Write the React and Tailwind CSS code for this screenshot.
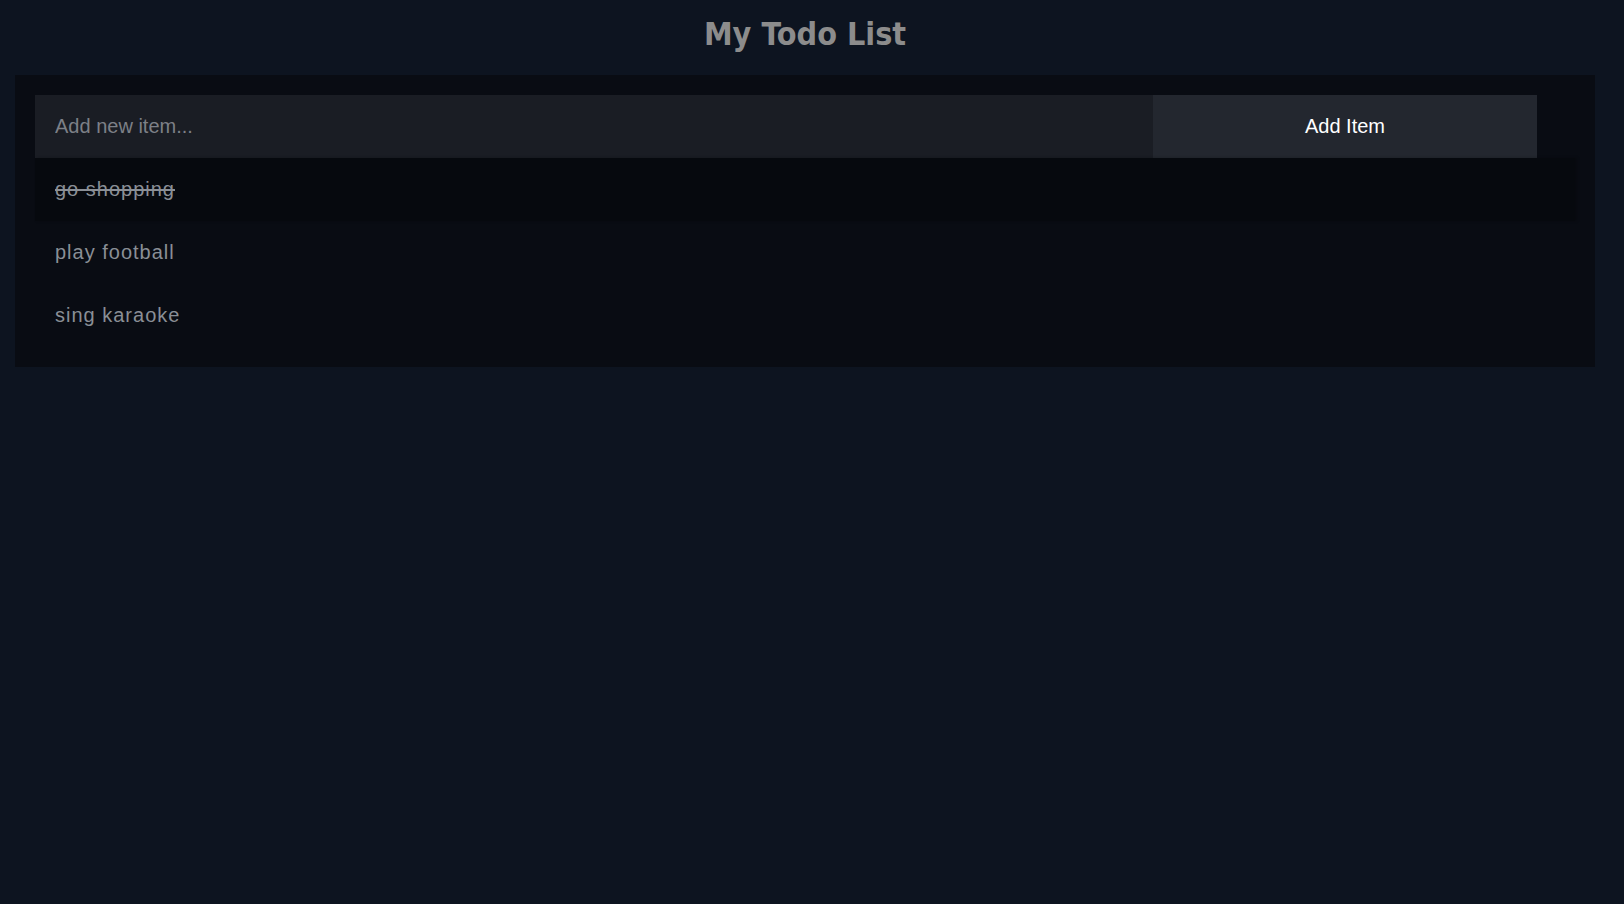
import React from "react";

export default function App() {
  const items = [
    { text: "go shopping", done: true },
    { text: "play football", done: false },
    { text: "sing karaoke", done: false },
  ];
  return (
    <div className="min-h-screen w-full bg-[#0d1420] pt-[16px]">
      <h1
        className="ml-[15px] w-[1580px] text-center text-[32px] font-bold leading-[37px] text-[#8c8c8c]"
        style={{ fontFamily: '"DejaVu Sans Condensed", "DejaVu Sans", sans-serif', fontStretch: "condensed" }}
      >
        My Todo List
      </h1>
      <div className="ml-[15px] mt-[22px] w-[1580px] bg-[#090c13] p-[20px] font-['Liberation_Sans',Arial,sans-serif]">
        <div className="flex w-[1502px]">
          <input
            type="text"
            placeholder="Add new item..."
            className="h-[63px] w-[1118px] bg-[#1a1d24] px-[20px] text-[20px] text-[#c0c0c0] outline-none placeholder:text-[#7d8087]"
          />
          <button className="h-[63px] w-[384px] bg-[#23272f] pb-[1px] text-[20px] text-white">
            Add Item
          </button>
        </div>
        <ul className="flex flex-col">
          {items.map((it) => (
            <li
              key={it.text}
              className={
                it.done
                  ? "px-[20px] py-[20px] text-[20px] leading-[23px] tracking-[1px] text-[#8a8f96] line-through bg-[#06090e] shadow-[2px_0_3px_rgba(0,0,0,0.25)]"
                  : "px-[20px] py-[20px] text-[20px] leading-[23px] tracking-[1px] text-[#8a8f96]"
              }
            >
              {it.text}
            </li>
          ))}
        </ul>
      </div>
    </div>
  );
}
